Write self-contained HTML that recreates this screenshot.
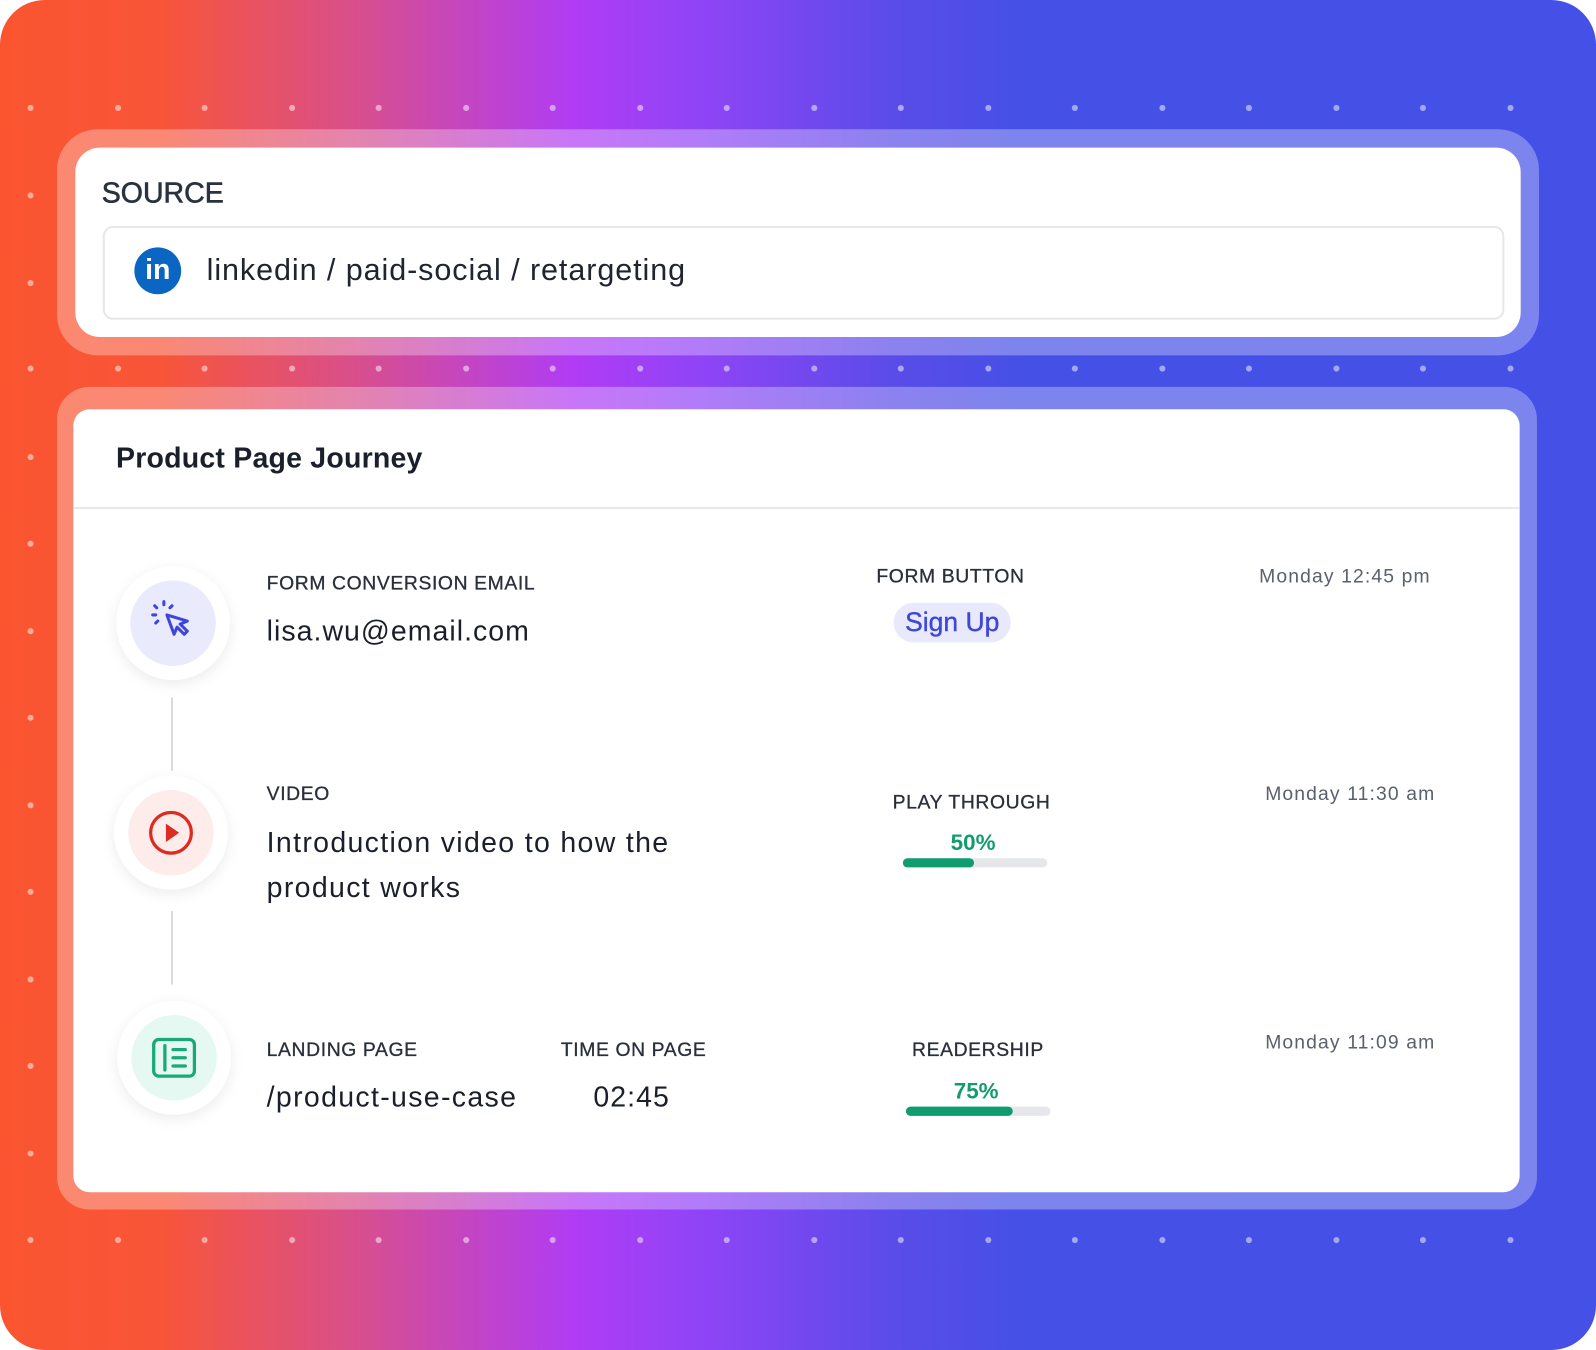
<!DOCTYPE html>
<html><head><style>
html,body{margin:0;padding:0;width:1596px;height:1350px;overflow:hidden;background:#fff}
#s{position:absolute;left:0;top:0;width:1568px;height:1326px;transform:scale(1.01786,1.0181);transform-origin:0 0;border-radius:44px;overflow:hidden;
background:linear-gradient(90deg,#fb5530 0%,#f85538 10%,#d94f8a 22%,#b03cf5 36%,#8f44f6 44%,#5a4ce8 56%,#4550e6 64%,#4450e6 100%);font-family:"Liberation Sans",sans-serif;color:#1f2430}
.d{position:absolute;width:6px;height:6px;border-radius:3px;background:rgba(255,255,255,.5)}
.o{position:absolute;background:rgba(255,255,255,.3)}
.w{position:absolute;background:#fff}
.a{position:absolute;white-space:nowrap}
.lab{font-size:19px;color:#2a2f3b;letter-spacing:.6px;-webkit-text-stroke:.3px #2a2f3b}
.val{font-size:28px;color:#1a1f2b;letter-spacing:1px}
.t{font-size:19px;color:#5a606c;letter-spacing:1.1px}
.circ{position:absolute;width:112px;height:112px;border-radius:56px;background:#fff;box-shadow:0 4px 14px rgba(0,0,0,.08)}
.circ>div{position:absolute;left:14px;top:14px;width:84px;height:84px;border-radius:42px}
.circ svg{position:absolute;left:26px;top:26px}
.bar{position:absolute;width:142px;height:9px;border-radius:5px;background:#e6e7ea}
.bar>div{height:9px;border-radius:5px;background:#109c6e}
</style></head><body><div id="s">
<div id="dots"></div>
<div class="o" style="left:56px;top:127px;width:1456px;height:222px;border-radius:40px"></div>
<div class="w" style="left:74px;top:145px;width:1420px;height:186px;border-radius:24px"></div>
<div class="a" style="left:100px;top:174px;font-size:28px;color:#2a3140;-webkit-text-stroke:.6px #2a3140">SOURCE</div>
<div class="w" style="left:101px;top:222px;width:1373px;height:88px;border:2px solid #e6e7ea;border-radius:10px"></div>
<div class="a" style="left:132px;top:243px;width:46px;height:46px;border-radius:23px;background:#0a66c2;color:#fff;font-weight:bold;font-size:28px;text-align:center;line-height:44px">in</div>
<div class="a" style="left:203px;top:249px;font-size:30px;color:#1f2430;letter-spacing:.9px">linkedin / paid-social / retargeting</div>

<div class="o" style="left:56px;top:380px;width:1454px;height:808px;border-radius:32px"></div>
<div class="w" style="left:72px;top:402px;width:1421px;height:769px;border-radius:16px"></div>
<div class="a" style="left:114px;top:434px;font-size:28px;font-weight:bold;color:#1a1f2b;letter-spacing:.2px">Product Page Journey</div>
<div class="a" style="left:72px;top:498px;width:1421px;height:2px;background:#e8e9ec"></div>

<div class="a" style="left:168px;top:685px;width:2px;height:72px;background:#d9dadd"></div>
<div class="a" style="left:168px;top:895px;width:2px;height:72px;background:#d9dadd"></div>

<div class="circ" style="left:114px;top:556px"><div style="background:#e9eafc"></div>
<svg width="60" height="60" viewBox="0 0 60 60" fill="none" stroke="#3f47d8" stroke-width="3" stroke-linecap="round" stroke-linejoin="round"><path d="M24 22 L31 41 L34 34 L41 41 L44 38 L37 31 L44 28 Z"/><path d="M21 9v3M12 13l2 2M29 13l-2 2M10 22h3M13 30l2-2"/></svg></div>
<div class="circ" style="left:112px;top:762px"><div style="background:#fdecea"></div>
<svg width="60" height="60" viewBox="0 0 60 60"><circle cx="30" cy="30" r="20" fill="none" stroke="#dc2b22" stroke-width="3.2"/><path d="M25 21 L38 30 L25 39Z" fill="#dc2b22"/></svg></div>
<div class="circ" style="left:115px;top:983px"><div style="background:#e5f8f1"></div>
<svg width="60" height="60" viewBox="0 0 60 60" fill="none" stroke="#1aa77a" stroke-width="3.2" stroke-linecap="round"><rect x="10" y="12" width="40" height="36" rx="5"/><path d="M21 18v24M29 22h12M29 30h12M29 38h12"/></svg></div>

<div class="a lab" style="left:262px;top:563px">FORM CONVERSION EMAIL</div>
<div class="a val" style="left:262px;top:604px">lisa.wu@email.com</div>
<div class="a lab" style="left:861px;top:556px">FORM BUTTON</div>
<div class="a" style="left:878px;top:592px;width:115px;height:39px;border-radius:20px;background:#e8e9fd;color:#3f47d8;font-size:26px;text-align:center;line-height:39px;-webkit-text-stroke:.4px #3f47d8">Sign Up</div>
<div class="a t" style="left:1237px;top:556px">Monday 12:45 pm</div>

<div class="a lab" style="left:262px;top:770px">VIDEO</div>
<div class="a val" style="left:262px;top:806px;line-height:44px;letter-spacing:1.3px">Introduction video to how the<br>product works</div>
<div class="a lab" style="left:877px;top:778px">PLAY THROUGH</div>
<div class="a" style="left:934px;top:815px;font-size:22px;color:#109c6e;font-weight:bold">50%</div>
<div class="bar" style="left:887px;top:843px"><div style="width:70px"></div></div>
<div class="a t" style="left:1243px;top:770px">Monday 11:30 am</div>

<div class="a lab" style="left:262px;top:1021px">LANDING PAGE</div>
<div class="a val" style="left:262px;top:1062px;letter-spacing:1.3px">/product-use-case</div>
<div class="a lab" style="left:551px;top:1021px">TIME ON PAGE</div>
<div class="a val" style="left:583px;top:1062px">02:45</div>
<div class="a lab" style="left:896px;top:1021px">READERSHIP</div>
<div class="a" style="left:937px;top:1059px;font-size:22px;color:#109c6e;font-weight:bold">75%</div>
<div class="bar" style="left:890px;top:1087px"><div style="width:105px"></div></div>
<div class="a t" style="left:1243px;top:1014px">Monday 11:09 am</div>
</div>
<script>
var h='';var rows=[106,362,1218];
for(var r=0;r<3;r++)for(var i=0;i<18;i++){h+='<div class="d" style="left:'+(27+i*85.5)+'px;top:'+(rows[r]-3)+'px"></div>';}
for(var y=192;y<1218;y+=85.5){if(Math.abs(y-362)>20)h+='<div class="d" style="left:27px;top:'+(y-3)+'px"></div>';}
document.getElementById('dots').innerHTML=h;
</script>
</body></html>
